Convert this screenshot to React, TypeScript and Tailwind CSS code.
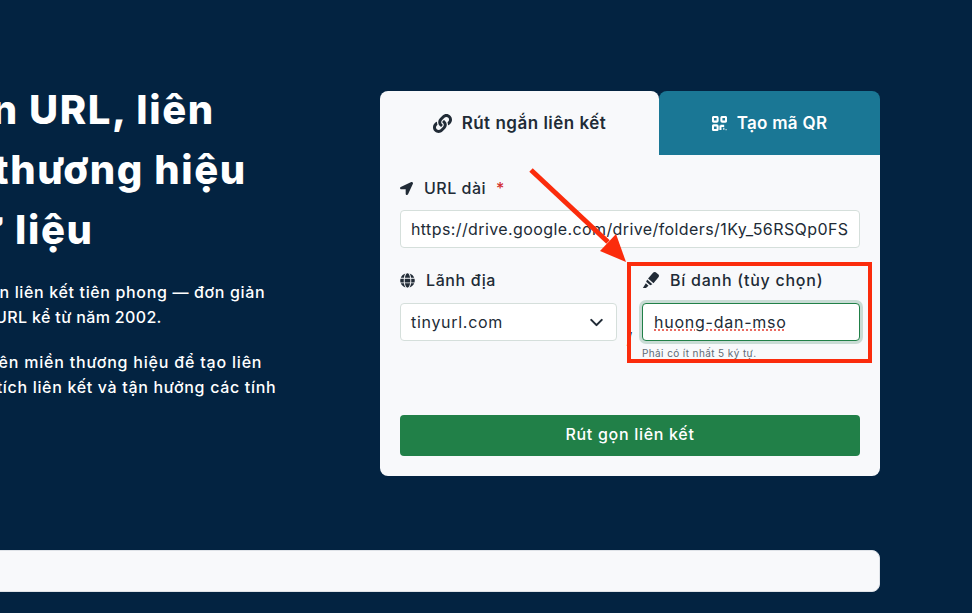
import { ChevronDown } from 'lucide-react';
import { FaGlobe, FaLink, FaLocationArrow } from 'react-icons/fa';

const FONT = "font-['Inter','Noto_Sans',sans-serif]";

function QrIcon() {
  return (
    <svg width="15" height="15" viewBox="0 0 16 16" fill="none" stroke="white" strokeWidth="2.2">
      <rect x="1" y="1" width="5" height="5" rx="1" />
      <rect x="10" y="1" width="5" height="5" rx="1" />
      <rect x="1" y="10" width="5" height="5" rx="1" />
      <path d="M9 10.5h4M9 10v5M12 13.5h1.2" />
      <path d="M14.5 14.5h1" strokeWidth="1.5" />
    </svg>
  );
}

function MarkerIcon() {
  return (
    <svg width="18" height="18" viewBox="0 0 16 16" fill="currentColor" className="mr-[10px] shrink-0">
      <path d="M5.4 6.6 10 1.4q1-1 2.2-.2l2.4 1.9q1.1 1 .2 2.2l-4.6 5.6Z" />
      <path d="M4.6 7.6 9.2 11.7l-1.9 1-3.6-3.2Z" />
      <path d="M3.4 10.8 5.8 13 3.5 15.2H.8Z" />
    </svg>
  );
}

export default function App() {
  return (
    <div className={`relative h-[613px] w-[972px] overflow-hidden bg-[#032341] pt-[91px] ${FONT}`}>
      <div className="flex">
        {/* hero text, runs off the left edge */}
        <div className="ml-[-168px] mt-[-11px] w-[548px] shrink-0 text-white">
          <h1 className="whitespace-nowrap text-[40px] font-extrabold leading-[60px] tracking-[1.6px]">
            <div className="ml-[-2px]">Rút ngắn URL, liên</div>
            <div className="ml-[84px]">kết thương hiệu</div>
            <div className="ml-[66px]">và tư liệu</div>
          </h1>
          <div className="mt-[20px] whitespace-nowrap text-[16px] font-medium leading-[25px]">
            <p className="ml-[-40px] tracking-[0.65px]">TinyURL là dịch vụ rút gọn liên kết tiên phong — đơn giản</p>
            <p className="ml-[14px] tracking-[0.35px]">và tin cậy cho mọi URL kể từ năm 2002.</p>
            <p className="ml-[86px] mt-[20px] tracking-[0.8px]">Sử dụng tên miền thương hiệu để tạo liên</p>
            <p className="ml-[83px] tracking-[0.68px]">kết, phân tích liên kết và tận hưởng các tính</p>
          </div>
        </div>

        {/* shorten form */}
        <div className="w-[500px] shrink-0 text-[#212b36]">
          <div className="flex h-[64px]">
            <div className="flex w-[279px] items-center justify-center gap-[10px] rounded-t-lg bg-[#f8f9fb] pt-[1px] text-[17px] font-semibold tracking-[0.5px]">
              <FaLink size={19} />
              <span>Rút ngắn liên kết</span>
            </div>
            <div className="flex flex-1 items-center justify-center gap-[10px] rounded-t-lg bg-[#1a7795] pt-[1px] text-[17px] font-semibold tracking-[0.3px] text-white">
              <QrIcon />
              <span>Tạo mã QR</span>
            </div>
          </div>

          <div className="h-[321px] rounded-b-lg bg-[#f8f9fb] px-[20px] pt-[23px]">
            <div className="flex h-[20px] items-center text-[16px] font-medium tracking-[0.5px]">
              <FaLocationArrow size={13} className="mr-[11px]" />
              <span>URL dài</span>
              <span className="ml-[10px] text-[#d32f2f]">*</span>
            </div>
            <input
              readOnly
              value="https://drive.google.com/drive/folders/1Ky_56RSQp0FS"
              className="mt-[12px] h-[38px] w-full rounded border border-[#d5dfdb] bg-white px-[10px] text-[16px] tracking-[0.4px] outline-none"
            />

            <div className="mt-[21px] flex">
              <div className="w-[217px]">
                <div className="flex h-[22px] items-center text-[16px] font-medium tracking-[0.6px]">
                  <FaGlobe size={15} className="mr-[11px]" />
                  <span>Lãnh địa</span>
                </div>
                <div className="mt-[12px] flex h-[38px] items-center justify-between rounded border border-[#d5dfdb] bg-white pl-[10px] pr-[9px] text-[16px] tracking-[0.7px]">
                  <span>tinyurl.com</span>
                  <ChevronDown size={21} strokeWidth={2.4} />
                </div>
              </div>
              <div className="flex w-[25px] items-end justify-center pb-[9px] text-[16px]">/</div>
              <div className="w-[218px]">
                <div className="flex h-[22px] items-center text-[16px] font-medium tracking-[0.75px]">
                  <MarkerIcon />
                  <span>Bí danh (tùy chọn)</span>
                </div>
                <input
                  readOnly
                  value="huong-dan-mso"
                  className="mt-[12px] h-[38px] w-full rounded border border-[#218048] bg-white px-[11px] text-[16px] tracking-[0.75px] underline decoration-[#e5483c] decoration-dotted underline-offset-2 shadow-[0_0_0_3px_#c9dcd5] outline-none"
                />
                <p className="mt-[6px] text-[10px] leading-[12px] tracking-[0.4px] text-[#5f6b76]">Phải có ít nhất 5 ký tự.</p>
              </div>
            </div>

            <button className="mt-[56px] h-[41px] w-full rounded bg-[#218048] pb-[3px] text-[16px] font-medium tracking-[0.7px] text-white">
              Rút gọn liên kết
            </button>
          </div>
        </div>
      </div>

      <div className="ml-[-20px] mt-[74px] h-[42px] w-[900px] rounded-lg border border-[#dfe3e8] bg-[#f8f9fb]" />

      {/* annotation drawn over the screenshot */}
      <svg className="absolute left-[520px] top-[160px]" width="120" height="110" viewBox="0 0 120 110">
        <path d="M11 10 L88 82" stroke="#fb2c0c" strokeWidth="5" />
        <path d="M106 102 L96 74 L80 91 Z" fill="#fb2c0c" />
      </svg>
      <div className="absolute left-[627px] top-[262px] h-[101px] w-[245px] border-[4px] border-[#fb2c0c]" />
    </div>
  );
}
